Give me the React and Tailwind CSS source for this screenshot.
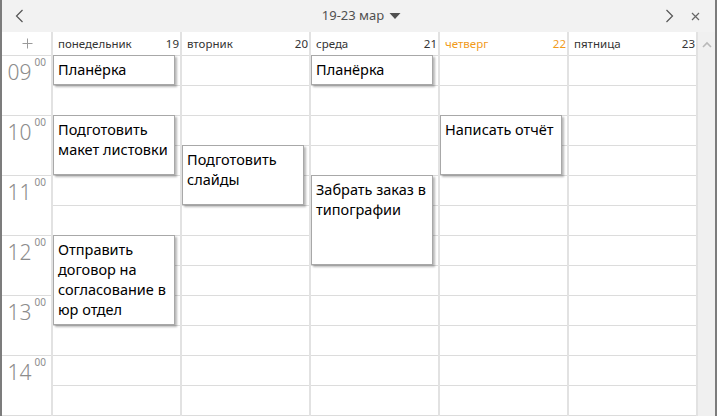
import React from "react";

const days = [
  { name: "понедельник", num: 19 },
  { name: "вторник", num: 20 },
  { name: "среда", num: 21 },
  { name: "четверг", num: 22, today: true },
  { name: "пятница", num: 23 },
];

const events = [
  { day: 0, start: 0, end: 1, text: "Планёрка" },
  { day: 0, start: 2, end: 4, text: "Подготовить макет листовки" },
  { day: 0, start: 6, end: 9, text: "Отправить договор на согласование в юр отдел" },
  { day: 1, start: 3, end: 5, text: "Подготовить слайды" },
  { day: 2, start: 0, end: 1, text: "Планёрка" },
  { day: 2, start: 4, end: 7, text: "Забрать заказ в типографии" },
  { day: 3, start: 2, end: 4, text: "Написать отчёт" },
];

const hours = ["09", "10", "11", "12", "13", "14", ""];
const font = { fontFamily: '"Noto Sans", "Open Sans", sans-serif' };

export default function App() {
  return (
    <div
      className="w-[717px] h-[416px] overflow-hidden flex flex-col border-l-2 border-r-2 border-[#7c7c7c] bg-white"
      style={font}
    >
      {/* Top bar */}
      <div className="h-[32px] shrink-0 bg-[#f2f2f2] flex items-center relative">
        <div className="w-[22px] flex justify-end">
          <svg width="9" height="14" viewBox="0 0 9 14">
            <path d="M7.5 1 L1.5 7 L7.5 13" fill="none" stroke="#555" strokeWidth="1.2" />
          </svg>
        </div>
        <div className="flex-1 flex items-center justify-center gap-[5px] text-[13px] text-[#505050] pl-[34px]">
          <span>19-23 мар</span>
          <svg width="12" height="8" viewBox="0 0 12 8">
            <path d="M0.5 1 L11.5 1 L6 7 Z" fill="#505050" />
          </svg>
        </div>
        <div className="flex items-center gap-[17px] pr-[15px]">
          <svg width="9" height="14" viewBox="0 0 9 14">
            <path d="M1.5 1 L7.5 7 L1.5 13" fill="none" stroke="#555" strokeWidth="1.2" />
          </svg>
          <svg width="9" height="9" viewBox="0 0 9 9">
            <path d="M1 1 L8 8 M8 1 L1 8" fill="none" stroke="#666" strokeWidth="1.2" />
          </svg>
        </div>
      </div>

      <div className="flex flex-1 min-h-0">
        {/* Calendar grid */}
        <div className="flex">
          {/* time column */}
          <div className="w-[51px] border-r-2 border-[#e2e2e2] flex flex-col">
            <div className="h-[23px] shrink-0 flex items-center justify-center pl-[2px] text-[#9a9a9a]">
              <svg width="11" height="11" viewBox="0 0 11 11">
                <path d="M5.5 0.5 V10.5 M0.5 5.5 H10.5" stroke="#9a9a9a" strokeWidth="1" />
              </svg>
            </div>
            {hours.map((h, i) => (
              <div
                key={i}
                className="h-[60px] shrink-0 border-t border-[#dcdcdc] flex justify-end items-start pr-[5px] pt-[4px] text-[#8c8c8c]"
              >
                {h && (
                  <>
                    <span className="text-[21px] leading-[24px] font-light">{h}</span>
                    <span className="text-[10px] leading-[10px] ml-[3px] mt-[-3px]">00</span>
                  </>
                )}
              </div>
            ))}
          </div>

          {days.map((d, di) => (
            <div key={d.name} className="w-[129px] border-r-2 border-[#e2e2e2] flex flex-col">
              <div
                className={
                  "h-[23px] shrink-0 flex items-center justify-between pl-[5px] pr-[1px] text-[11.5px] " +
                  (d.today ? "text-[#f19a1a]" : "text-[#333333]")
                }
              >
                <span>{d.name}</span>
                <span>{d.num}</span>
              </div>
              <div className="relative flex flex-col">
                {Array.from({ length: 13 }).map((_, i) => (
                  <div key={i} className="h-[30px] shrink-0 border-t border-[#dcdcdc]" />
                ))}
                {events
                  .filter((e) => e.day === di)
                  .map((e, i) => (
                    <div
                      key={i}
                      className="absolute left-0 w-[122px] bg-white border border-[#a8a8a8] shadow-[2px_2px_2px_rgba(0,0,0,0.28)] pl-[4px] pr-[3px] pt-[3px] text-[14.5px] leading-[20px] text-black"
                      style={{ top: e.start * 30, height: (e.end - e.start) * 30 }}
                    >
                      {e.text}
                    </div>
                  ))}
              </div>
            </div>
          ))}
        </div>

        {/* Scrollbar */}
        <div className="w-[17px] bg-[#f0f0f0] flex flex-col items-center pt-[9px]">
          <svg width="10" height="7" viewBox="0 0 10 7">
            <path d="M1 6 L5 2 L9 6" fill="none" stroke="#b8b8b8" strokeWidth="1.6" />
          </svg>
        </div>
      </div>
    </div>
  );
}
